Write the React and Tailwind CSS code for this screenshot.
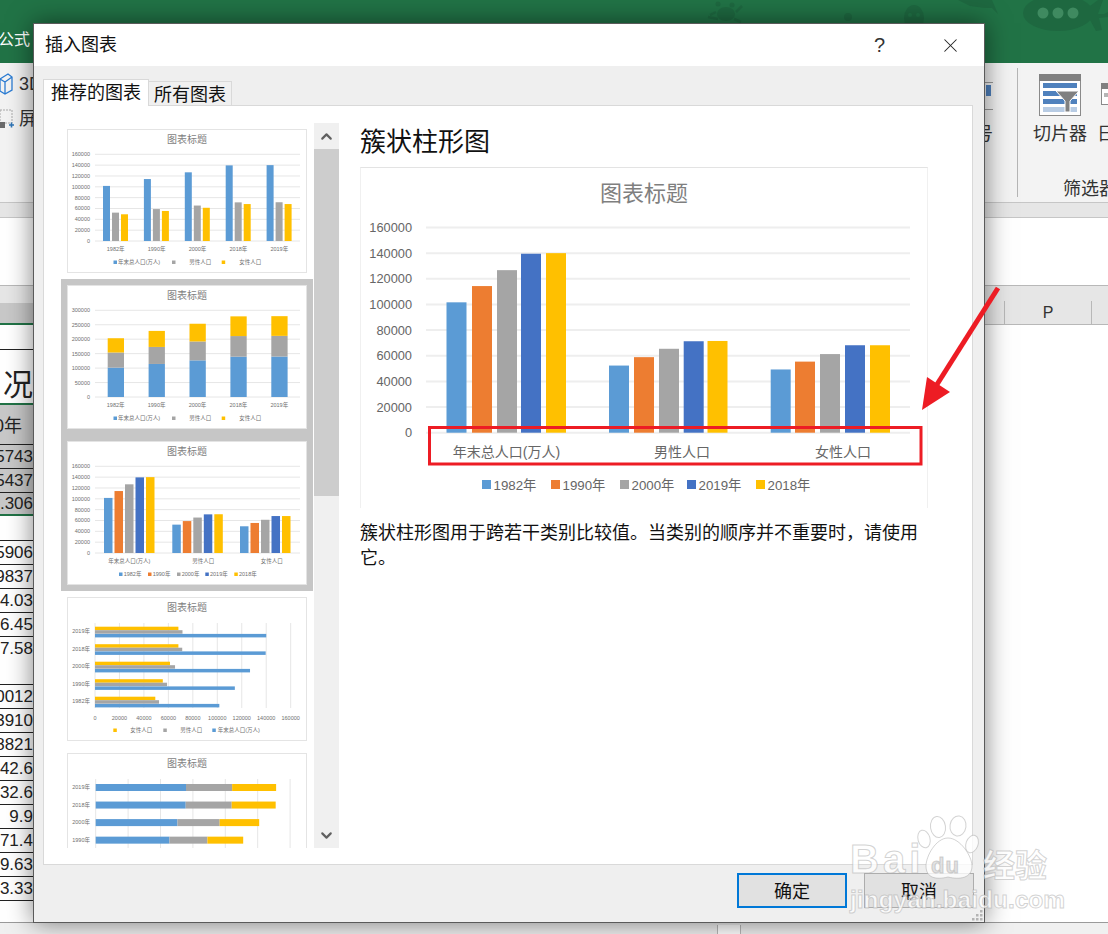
import { ChevronUp, ChevronDown, X } from 'lucide-react';

const BLUE = '#5b9bd5';
const ORANGE = '#ed7d31';
const GRAY = '#a5a5a5';
const NAVY = '#4472c4';
const YELLOW = '#ffc000';

// one row per year: total, male, female
const YEARS = [
  { y: '1982年', v: [101654, 52352, 49302] },
  { y: '1990年', v: [114333, 58904, 55429] },
  { y: '2000年', v: [126743, 65437, 61306] },
  { y: '2018年', v: [139538, 71307, 68187] },
  { y: '2019年', v: [140005, 71527, 68187] },
];
const TRIO = [BLUE, GRAY, YELLOW];
const CATS = ['年末总人口(万人)', '男性人口', '女性人口'];
// one row per category, in legend order
const GROUPS = [
  [101654, 114333, 126743, 139538, 140005],
  [52352, 58904, 65437, 71307, 71527],
  [49302, 55429, 61306, 68186, 68187],
];
const FIVE = [BLUE, ORANGE, GRAY, NAVY, YELLOW];

const SHEET = [
  { t: '5743', bg: 'bg-[#c8c8c8]' },
  { t: '5437', bg: 'bg-[#c8c8c8]' },
  { t: '.306', bg: 'bg-[#c8c8c8]', green: true },
  { t: '', blank: true },
  { t: '5906' },
  { t: '9837' },
  { t: '4.03' },
  { t: '6.45' },
  { t: '7.58' },
  { t: '', blank: true },
  { t: '0012' },
  { t: '3910' },
  { t: '8821' },
  { t: '42.6' },
  { t: '32.6' },
  { t: '9.9' },
  { t: '71.4' },
  { t: '9.63' },
  { t: '3.33' },
];

function Frame({ children }) {
  return (
    <div className="w-[240px] h-[144px] shrink-0 bg-white">
      <svg width="240" height="144" viewBox="0 0 240 144" className="block">
        <rect x="0.5" y="0.5" width="239" height="143" fill="#fff" stroke="#e4e4e4" />
        <text x="120" y="14" textAnchor="middle" fontSize="10" fill="#7f7f7f">图表标题</text>
        {children}
      </svg>
    </div>
  );
}

function Small({ x, y, a = 'start', children }) {
  return <text x={x} y={y} textAnchor={a} fontSize="5.5" fill="#6f6f6f">{children}</text>;
}

function HGrid({ labels }) {
  const step = 86.7 / (labels.length - 1);
  return labels.map((l, i) => {
    const y = 112 - i * step;
    return (
      <g key={l}>
        <line x1="28" x2="233" y1={y} y2={y} stroke="#e6e6e6" />
        <Small x="23" y={y + 2} a="end">{l}</Small>
      </g>
    );
  });
}

const L160 = ['0', '20000', '40000', '60000', '80000', '100000', '120000', '140000', '160000'];
const L300 = ['0', '50000', '100000', '150000', '200000', '250000', '300000'];

function LegendTrio() {
  return (
    <>
      <rect x="46.5" y="131.5" width="3.5" height="3.5" fill={BLUE} />
      <Small x="51" y="135">{CATS[0]}</Small>
      <rect x="105" y="131.5" width="3.5" height="3.5" fill={GRAY} />
      <Small x="122.3" y="135">{CATS[1]}</Small>
      <rect x="154.7" y="131.5" width="3.5" height="3.5" fill={YELLOW} />
      <Small x="172.3" y="135">{CATS[2]}</Small>
    </>
  );
}

function ThumbColumns() {
  return (
    <Frame>
      <HGrid labels={L160} />
      {YEARS.map((d, i) => (
        <g key={d.y}>
          {d.v.map((v, j) => {
            const h = (v / 160000) * 86.7;
            return <rect key={j} x={36 + i * 40.9 + j * 9} y={112 - h} width="7" height={h} fill={TRIO[j]} />;
          })}
          <Small x={48.7 + i * 40.9} y="122" a="middle">{d.y}</Small>
        </g>
      ))}
      <LegendTrio />
    </Frame>
  );
}

function ThumbStacked() {
  return (
    <Frame>
      <HGrid labels={L300} />
      {YEARS.map((d, i) => {
        let top = 112;
        return (
          <g key={d.y}>
            {d.v.map((v, j) => {
              const h = (v / 300000) * 86.7;
              top -= h;
              return <rect key={j} x={40.7 + i * 40.9} y={top} width="16.3" height={h} fill={TRIO[j]} />;
            })}
            <Small x={48.7 + i * 40.9} y="122" a="middle">{d.y}</Small>
          </g>
        );
      })}
      <LegendTrio />
    </Frame>
  );
}

function ThumbGrouped() {
  const starts = [37, 105.3, 173];
  const centers = [62.3, 136.3, 204.7];
  const legendX = [52, 81, 110, 138.3, 167.3];
  const names = ['1982年', '1990年', '2000年', '2019年', '2018年'];
  return (
    <Frame>
      <HGrid labels={L160} />
      {GROUPS.map((g, i) => (
        <g key={i}>
          {g.map((v, j) => {
            const h = (v / 160000) * 86.7;
            return <rect key={j} x={starts[i] + j * 10.5} y={112 - h} width="8.5" height={h} fill={FIVE[j]} />;
          })}
          <Small x={centers[i]} y="122" a="middle">{CATS[i]}</Small>
        </g>
      ))}
      {names.map((n, i) => (
        <g key={n}>
          <rect x={legendX[i]} y="131.5" width="3.5" height="3.5" fill={FIVE[i]} />
          <Small x={legendX[i] + 4.7} y="135">{n}</Small>
        </g>
      ))}
    </Frame>
  );
}

function ThumbBars() {
  const rows = [...YEARS].reverse();
  const ticks = L160;
  return (
    <Frame>
      {ticks.map((l, i) => (
        <g key={l}>
          <line x1={28 + i * 24.46} x2={28 + i * 24.46} y1="26" y2="111" stroke="#e6e6e6" />
          <Small x={28 + i * 24.46} y="123" a="middle">{l}</Small>
        </g>
      ))}
      {rows.map((d, i) => (
        <g key={d.y}>
          <rect x="28" y={29.7 + i * 17.5} width={(d.v[2] / 160000) * 195.7} height="3.5" fill={YELLOW} />
          <rect x="28" y={33.2 + i * 17.5} width={(d.v[1] / 160000) * 195.7} height="3.5" fill={GRAY} />
          <rect x="28" y={36.9 + i * 17.5} width={(d.v[0] / 160000) * 195.7} height="3.5" fill={BLUE} />
          <Small x="23" y={36 + i * 17.5} a="end">{d.y}</Small>
        </g>
      ))}
      <rect x="46.3" y="131.5" width="3.5" height="3.5" fill={YELLOW} />
      <Small x="63.3" y="135">{CATS[2]}</Small>
      <rect x="96.3" y="131.5" width="3.5" height="3.5" fill={GRAY} />
      <Small x="113.3" y="135">{CATS[1]}</Small>
      <rect x="145.3" y="131.5" width="3.5" height="3.5" fill={BLUE} />
      <Small x="150.7" y="135">{CATS[0]}</Small>
    </Frame>
  );
}

function ThumbStackedBars() {
  const rows = [...YEARS].reverse();
  return (
    <Frame>
      {[0, 1, 2, 3, 4, 5, 6].map((i) => (
        <line key={i} x1={28.7 + i * 32.4} x2={28.7 + i * 32.4} y1="26" y2="111" stroke="#e6e6e6" />
      ))}
      {rows.map((d, i) => {
        let x = 28.7;
        return (
          <g key={d.y}>
            {d.v.map((v, j) => {
              const w = (v / 50000) * 32.25;
              const r = <rect key={j} x={x} y={31 + i * 17.55} width={w} height="7" fill={TRIO[j]} />;
              x += w;
              return r;
            })}
            <Small x="23" y={36 + i * 17.55} a="end">{d.y}</Small>
          </g>
        );
      })}
    </Frame>
  );
}

function MainChart() {
  const groupX = [
    [446.5, 472, 497, 521, 546],
    [609, 634, 659, 683.7, 707.5],
    [770.7, 795, 820, 845, 870],
  ];
  const legend = [
    ['1982年', 482],
    ['1990年', 551],
    ['2000年', 620],
    ['2019年', 687],
    ['2018年', 756],
  ];
  return (
    <div className="w-[568px] h-[341px] shrink-0 border-x border-t border-x-[#f0f0f0] border-t-[#e3e3e3] bg-white">
      <svg width="566" height="340" viewBox="361 168 566 340" className="block">
        <text x="644" y="201" textAnchor="middle" fontSize="22" fill="#7f7f7f">图表标题</text>
        {L160.map((l, i) => {
          const y = 432.7 - i * 25.65;
          return (
            <g key={l}>
              <line x1="426" x2="910" y1={y} y2={y} stroke="#eeeeee" strokeWidth="2" />
              <text x="412" y={y + 4.5} textAnchor="end" fontSize="12.8" fill="#666666">{l}</text>
            </g>
          );
        })}
        {GROUPS.map((g, i) =>
          g.map((v, j) => {
            const h = (v / 160000) * 205.2;
            return <rect key={j} x={groupX[i][j]} y={432.7 - h} width="20" height={h} fill={FIVE[j]} />;
          })
        )}
        {CATS.map((c, i) => (
          <text key={c} x={[506.5, 682, 843][i]} y="457" textAnchor="middle" fontSize="14" fill="#666666">{c}</text>
        ))}
        {legend.map(([n, x], i) => (
          <g key={n}>
            <rect x={x} y="480" width="9" height="9" fill={FIVE[i]} />
            <text x={x + 11.5} y="489.5" fontSize="13.3" fill="#666666">{n}</text>
          </g>
        ))}
      </svg>
    </div>
  );
}

function ChartList() {
  return (
    <div className="w-[252px] h-[725px] overflow-hidden shrink-0 flex flex-col">
      <div className="p-[6px]"><ThumbColumns /></div>
      <div className="p-[6px] bg-[#c6c6c6] flex flex-col gap-[12px]">
        <ThumbStacked />
        <ThumbGrouped />
      </div>
      <div className="p-[6px]"><ThumbBars /></div>
      <div className="p-[6px]"><ThumbStackedBars /></div>
    </div>
  );
}

function ScrollBar() {
  return (
    <div className="w-[25px] h-[725px] ml-px shrink-0 bg-[#f0f0f0] flex flex-col">
      <div className="h-[26px] flex items-center justify-center text-[#606060]">
        <ChevronUp size={17} strokeWidth={3} />
      </div>
      <div className="h-[347px] bg-[#cdcdcd]" />
      <div className="mt-auto h-[26px] flex items-center justify-center text-[#606060]">
        <ChevronDown size={17} strokeWidth={3} />
      </div>
    </div>
  );
}

function Dialog() {
  return (
    <div className="absolute left-[33px] top-[23px] w-[952px] h-[900px] flex flex-col bg-[#efefef] border-t border-x border-b border-[#5a5a5a] shadow-[0_0_24px_rgba(0,0,0,0.5)]">
      {/* title bar */}
      <div className="h-[42px] shrink-0 bg-white flex items-center pl-[11px] text-[18px] text-[#111]">
        <span>插入图表</span>
        <span className="ml-auto mr-[54px] text-[20px] text-[#333]">?</span>
        <X size={23} strokeWidth={1.1} className="mr-[22px] text-[#222]" />
      </div>

      <div className="flex-1 flex flex-col px-[9px] min-h-0">
        {/* tabs */}
        <div className="h-[27px] mt-[12px] flex items-end text-[18px] text-[#111] shrink-0">
          <div className="h-[27px] w-[106px] -mb-px z-10 bg-white border-x border-t border-[#d9d9d9] flex items-center justify-center">
            推荐的图表
          </div>
          <div className="h-[24px] w-[83px] pt-[3px] bg-[#f0f0f0] border-r border-t border-[#d9d9d9] flex items-center justify-center">
            所有图表
          </div>
        </div>

        {/* panel */}
        <div className="w-[930px] h-[760px] bg-white border border-[#d9d9d9] flex pl-[17px] pt-[17px] shrink-0">
          <ChartList />
          <ScrollBar />
          <div className="ml-[21px] flex flex-col">
            <h2 className="h-[44px] text-[26px] leading-[38px] text-[#111] whitespace-nowrap">簇状柱形图</h2>
            <MainChart />
            <p className="mt-[13px] w-[567px] text-[18px] leading-[25px] text-[#111]">
              簇状柱形图用于跨若干类别比较值。当类别的顺序并不重要时，请使用它。
            </p>
          </div>
        </div>

        {/* footer */}
        <div className="flex justify-end items-start pt-[8px] gap-[17px] text-[18px] text-[#111] mr-px">
          <button className="w-[110px] h-[35px] pt-[3px] bg-[#e1e1e1] border-2 border-[#0078d7] flex items-center justify-center">确定</button>
          <button className="w-[110px] h-[35px] pt-[3px] bg-[#e1e1e1] border border-[#adadad] flex items-center justify-center">取消</button>
        </div>
      </div>

      {/* resize grip */}
      <svg width="12" height="12" viewBox="0 0 12 12" className="absolute right-0 bottom-0" fill="#b4b4b4">
        <rect x="8" y="0" width="2.5" height="2.5" />
        <rect x="4" y="4" width="2.5" height="2.5" />
        <rect x="8" y="4" width="2.5" height="2.5" />
        <rect x="0" y="8" width="2.5" height="2.5" />
        <rect x="4" y="8" width="2.5" height="2.5" />
        <rect x="8" y="8" width="2.5" height="2.5" />
      </svg>
    </div>
  );
}

function SeaPattern() {
  return (
    <svg width="448" height="63" viewBox="660 0 448 63" className="absolute right-0 top-0" fill="#1e6840">
      {/* crab */}
      <ellipse cx="726" cy="14" rx="9" ry="7" />
      <path d="M716 12 L710 15 M736 12 L742 6 M718 19 L708 17 M734 19 L741 22" stroke="#1e6840" strokeWidth="2.5" fill="none" />
      <circle cx="718" cy="4" r="2.5" />
      <circle cx="732" cy="5" r="2.5" />
      {/* bubble */}
      <circle cx="848" cy="17" r="4" />
      {/* skull */}
      <ellipse cx="914" cy="18" rx="10" ry="13" />
      <circle cx="910" cy="15" r="2" fill="#217346" />
      <circle cx="918" cy="15" r="2" fill="#217346" />
      {/* octopus */}
      <path d="M958 0 L992 0 L998 14 L992 8 L985 8 L970 6 Z" />
      {/* submarine */}
      <ellipse cx="1058" cy="13" rx="35" ry="18" />
      <circle cx="1043" cy="13" r="5.5" fill="#3f8a60" />
      <circle cx="1058" cy="13" r="5.5" fill="#3f8a60" />
      <circle cx="1073" cy="13" r="5.5" fill="#3f8a60" />
      <path d="M1090 6 L1098 0 L1103 0 L1098 14 L1104 14 L1108 12 L1108 17 L1099 18 L1102 30 L1096 31 L1090 20 Z" />
    </svg>
  );
}

function SlicerIcon() {
  return (
    <svg width="42" height="42" viewBox="0 0 42 42" className="shrink-0">
      <rect x="0.5" y="0.5" width="41" height="41" fill="#fff" stroke="#8a8a8a" />
      <rect x="0" y="0" width="42" height="7" fill="#808080" />
      <rect x="4" y="9" width="34" height="5" fill="#4f81bd" />
      <rect x="4" y="17" width="34" height="5" fill="#4f81bd" />
      <rect x="4" y="25" width="34" height="5" fill="#4f81bd" />
      <rect x="4" y="33" width="34" height="5" fill="#b8cce4" />
      <path d="M17 17 L40 17 L31 27 L31 38 L26 38 L26 27 Z" fill="#808080" stroke="#fff" strokeWidth="1" />
    </svg>
  );
}

function Ribbon() {
  return (
    <div className="h-[139px] bg-[#f3f3f3] flex text-[#333] overflow-hidden">
      <div className="w-[33px] shrink-0 flex flex-col pt-[9px] text-[18px] text-[#333]">
        <div className="h-[24px] flex items-center whitespace-nowrap overflow-hidden">
          <svg width="13" height="22" viewBox="0 0 13 22" className="shrink-0 mr-[6px]" fill="none" stroke="#2b7cd3" strokeWidth="1.3">
            <path d="M0 6 L8 1 L12 4 L12 17 L5 21 L0 18 Z M0 6 L5 9 L12 4 M5 9 L5 21" />
          </svg>
          3D
        </div>
        <div className="h-[24px] mt-[11px] flex items-center whitespace-nowrap overflow-hidden">
          <svg width="14" height="20" viewBox="0 0 14 20" className="shrink-0 mr-[5px]">
            <rect x="0" y="1" width="12" height="13" fill="none" stroke="#aaa" strokeDasharray="2 1" />
            <rect x="0" y="13" width="5" height="6" fill="#6b6b6b" />
            <path d="M9 16 L14 16 M11.5 13.5 L11.5 18.5" stroke="#2e75b6" strokeWidth="1.6" />
          </svg>
          屏
        </div>
      </div>

      <div className="flex-1" />

      {/* the group clipped by the dialog */}
      <div className="w-[33px] mr-[24px] shrink-0 flex flex-col items-end pt-[19px]">
        <svg width="33" height="28" viewBox="0 0 33 28">
          <path d="M0 .5 H33 M0 27.5 H33" stroke="#9a9a9a" />
          <rect x="26" y="3" width="5" height="11" fill="#4f81bd" />
          <rect x="21" y="14" width="2" height="11" fill="#c0504d" />
        </svg>
        <span className="mt-[12px] text-[18px] leading-[24px]">号</span>
      </div>

      {/* slicer group */}
      <div className="w-[91px] my-[5px] shrink-0 border-l border-[#b5b5b5] flex flex-col overflow-hidden">
        <div className="flex items-start pl-[21px] pt-[6px] gap-[20px]">
          <SlicerIcon />
          <svg width="20" height="22" viewBox="0 0 20 22" className="shrink-0 mt-[9px]">
            <rect x="0.5" y="0.5" width="24" height="21" fill="#fff" stroke="#8a8a8a" />
            <rect x="0" y="0" width="20" height="6" fill="#808080" />
            <rect x="3" y="10" width="17" height="4" fill="#b5b5b5" />
          </svg>
        </div>
        <div className="flex pl-[15px] mt-[6px] gap-[10px] text-[18px] leading-[24px] whitespace-nowrap">
          <span>切片器</span>
          <span>日</span>
        </div>
        <div className="pl-[45px] mt-[31px] text-[18px] leading-[24px] whitespace-nowrap">筛选器</div>
      </div>
    </div>
  );
}

function SheetColumn() {
  return (
    <div className="w-[33px] shrink-0 overflow-hidden flex flex-col text-[#222]">
      <div className="h-[24px] shrink-0" />
      <div className="h-[56px] shrink-0 border-t border-t-[#222] border-b-2 border-b-[#217346] flex justify-end items-end text-[30px] leading-[36px] whitespace-nowrap">况</div>
      <div className="h-[39px] shrink-0 bg-[#c8c8c8] flex justify-end items-center pr-[11px] pt-[3px] text-[18px] whitespace-nowrap">0年</div>
      {SHEET.map((r, i) => (
        <div
          key={i}
          className={`h-[24px] shrink-0 flex justify-end items-center text-[17px] leading-[24px] whitespace-nowrap ${r.bg || ''} ${r.blank ? '' : 'border-t border-t-[#222]'} ${r.green ? 'border-b-2 border-b-[#217346]' : ''}`}
        >
          {r.t}
        </div>
      ))}
      <div className="border-t border-t-[#222]" />
    </div>
  );
}

function Backdrop() {
  return (
    <div className="h-[934px] flex flex-col">
      <div className="h-[63px] shrink-0 bg-[#217346] relative text-white text-[16px]">
        <span className="block pt-[29px] -ml-[2px] leading-[22px]">公式</span>
        <SeaPattern />
      </div>
      <Ribbon />
      <div className="h-[16px] shrink-0 bg-[#e6e6e6] border-y border-[#c6c6c6]" />
      <div className="h-[67px] shrink-0 bg-white" />
      {/* column headers */}
      <div className="h-[40px] shrink-0 bg-[#e6e6e6] border-t border-b border-[#b8b8b8] flex items-end text-[16px] text-[#333]">
        <div className="w-[33px] h-[22px] bg-[#c8c8c8] border-b-2 border-[#217346] -mb-px" />
        <div className="flex-1" />
        <div className="w-[88px] h-[23px] border-x border-[#b8b8b8] flex items-center justify-center mr-[16px]">P</div>
      </div>
      {/* sheet */}
      <div className="flex-1 bg-white flex min-h-0">
        <SheetColumn />
      </div>
      <div className="h-[12px] shrink-0 bg-[#f0f0f0] border-t border-[#9a9a9a] flex">
        <div className="w-[24px] h-[12px] ml-[717px] mt-[2px] bg-white border-x border-[#b8b8b8]" />
      </div>
    </div>
  );
}

// arrow, box and watermark drawn onto the screenshot
function Overlay() {
  return (
    <svg width="1108" height="934" viewBox="0 0 1108 934" className="absolute left-0 top-0 pointer-events-none">
      <rect x="429.5" y="427.5" width="491.5" height="36.5" fill="none" stroke="#ed1c24" strokeWidth="3" />
      <line x1="998" y1="288" x2="936" y2="386" stroke="#ed1c24" strokeWidth="5" />
      <polygon points="922,410 927,377 950,392" fill="#ed1c24" />

      <g fill="#ffffff" fillOpacity="0.78" stroke="#a8a8a8" strokeOpacity="0.5" strokeWidth="1">
        <ellipse cx="924" cy="839" rx="6" ry="9" transform="rotate(-15 924 839)" />
        <ellipse cx="938" cy="827" rx="7.5" ry="10.5" transform="rotate(-8 938 827)" />
        <ellipse cx="958" cy="826" rx="8" ry="10" transform="rotate(8 958 826)" />
        <ellipse cx="972" cy="844" rx="6" ry="9" transform="rotate(20 972 844)" />
        <path d="M948 838 C960 838 972 856 972 866 C972 878 960 880 948 877 C936 880 926 878 926 866 C926 856 936 838 948 838 Z" />
        <text x="850" y="873" fontSize="40" fontWeight="700" letterSpacing="4">Bai</text>
        <text x="931" y="873" fontSize="22" fontWeight="700" fill="#8f8f8f" fillOpacity="0.25" letterSpacing="1">du</text>
        <text x="983" y="877" fontSize="32" fontWeight="700">经验</text>
        <text x="850" y="908" fontSize="24.5" fontWeight="700">jingyan.baidu.com</text>
      </g>
    </svg>
  );
}

export default function App() {
  return (
    <div className="relative w-[1108px] h-[934px] overflow-hidden bg-white font-['Liberation_Sans','Noto_Sans_CJK_SC',sans-serif]">
      <Backdrop />
      <Dialog />
      <Overlay />
    </div>
  );
}
